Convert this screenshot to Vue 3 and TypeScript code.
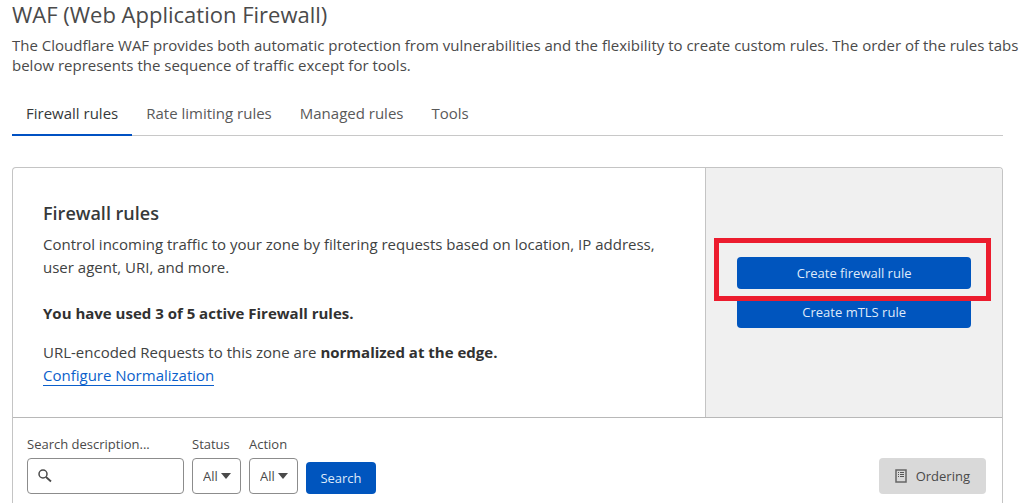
<script setup lang="ts">
import { ref } from 'vue'

const tabs: string[] = ['Firewall rules', 'Rate limiting rules', 'Managed rules', 'Tools']
const activeTab = ref<string>(tabs[0])
const query = ref<string>('')
const filters = ref([
  { id: 'status', label: 'Status', value: 'All', options: ['All', 'Enabled', 'Disabled'] },
  { id: 'action', label: 'Action', value: 'All', options: ['All', 'Block', 'Allow'] },
])
</script>

<template>
  <main class="page">
    <header class="intro">
      <h1>WAF (Web Application Firewall)</h1>
      <p>
        The Cloudflare WAF provides both automatic protection from vulnerabilities and the flexibility to create custom
        rules. The order of the rules tabs below represents the sequence of traffic except for tools.
      </p>
    </header>

    <div class="content">
      <nav class="tabs">
        <a
          v-for="tab in tabs"
          :key="tab"
          href="#"
          class="tab"
          :class="{ active: tab === activeTab }"
          @click.prevent="activeTab = tab"
          >{{ tab }}</a
        >
      </nav>

      <section class="panel">
        <div class="summary">
          <div class="details">
            <h2>Firewall rules</h2>
            <p>
              Control incoming traffic to your zone by filtering requests based on location, IP address, user agent,
              URI, and more.
            </p>
            <p class="usage"><strong>You have used 3 of 5 active Firewall rules.</strong></p>
            <p>URL-encoded Requests to this zone are <strong>normalized at the edge.</strong></p>
            <p><a href="#" class="link">Configure Normalization</a></p>
          </div>
          <div class="actions">
            <div class="highlighted">
              <button type="button" class="primary">Create firewall rule</button>
              <span class="marker"></span>
            </div>
            <button type="button" class="primary">Create mTLS rule</button>
          </div>
        </div>

        <form class="filters" @submit.prevent>
          <div class="field search">
            <label for="search">Search description...</label>
            <div class="box">
              <svg class="magnifier" viewBox="0 0 14 14" width="14" height="14" aria-hidden="true">
                <circle cx="5" cy="5" r="4" fill="none" stroke="#4a4a4a" stroke-width="1.5" />
                <path d="M8 8L13 12.5" stroke="#4a4a4a" stroke-width="1.8" />
              </svg>
              <input id="search" v-model="query" type="text" />
            </div>
          </div>
          <div v-for="filter in filters" :key="filter.id" class="field">
            <label :for="filter.id">{{ filter.label }}</label>
            <div class="box select">
              <select :id="filter.id" v-model="filter.value">
                <option v-for="option in filter.options" :key="option">{{ option }}</option>
              </select>
              <svg class="caret" viewBox="0 0 10 6" width="10" height="6" aria-hidden="true">
                <path d="M0 0H10L5 6Z" fill="#4a4a4a" />
              </svg>
            </div>
          </div>
          <button type="submit" class="primary submit">Search</button>
          <button type="button" class="ordering">
            <svg viewBox="0 0 12 14" width="12" height="14" aria-hidden="true">
              <rect x="1" y="1" width="10" height="12" fill="none" stroke="#666" stroke-width="1.5" />
              <path d="M3 3.5H4M5 3.5H9M3 5.5H4M5 5.5H9M3 7.5H4M5 7.5H9" stroke="#555" />
            </svg>
            <span>Ordering</span>
          </button>
        </form>
      </section>
    </div>
  </main>
</template>

<style>
body {
  margin: 0;
  background: #fff;
}
</style>

<style scoped>
.page {
  font-family: 'Open Sans', 'Noto Sans', sans-serif;
  font-size: 15px;
  color: #4a4a4a;
}
h1,
h2,
p {
  margin: 0;
}
.intro {
  padding: 0 2px 0 12px;
  line-height: 20px;
}
h1 {
  margin-bottom: 7px;
  font-size: 22px;
  line-height: 28px;
  font-weight: 400;
}
.content {
  padding: 0 21px 0 12px;
}
.tabs {
  display: flex;
  margin-top: 18px;
  border-bottom: 1px solid #c8c8c8;
}
.tab {
  padding: 8px 14px 9px;
  line-height: 24px;
  color: #595959;
  text-decoration: none;
  border-bottom: 2px solid transparent;
  margin-bottom: -1px;
}
.tab.active {
  color: #36393a;
  border-bottom-color: #0051c3;
}
.panel {
  margin-top: 31px;
  border: 1px solid #c4c4c4;
  border-bottom: 0;
  border-radius: 4px 4px 0 0;
}
.summary {
  display: grid;
  grid-template-columns: 7fr 3fr;
  border-bottom: 1px solid #b8b8b8;
}
.details {
  padding: 31px 30px 30px;
  line-height: 23px;
  color: #404242;
}
h2 {
  margin-bottom: 6px;
  font-size: 18px;
  line-height: 28px;
  font-weight: 600;
  color: #36393a;
}
strong {
  font-weight: 700;
  color: #313131;
}
.usage {
  margin: 23px 0 16px;
}
.link {
  color: #0b5fcb;
  text-decoration: none;
  border-bottom: 1px solid #0b5fcb;
}
.actions {
  display: flex;
  flex-direction: column;
  justify-content: center;
  gap: 7px;
  padding: 0 31px;
  border-left: 1px solid #c4c4c4;
  border-top-right-radius: 3px;
  background: #f0f0f0;
}
button,
input,
select {
  font: inherit;
}
.primary {
  width: 100%;
  height: 32px;
  padding: 0;
  border: 0;
  border-radius: 4px;
  background: #0055be;
  color: #dfeafa;
  font-size: 13px;
}
.highlighted {
  position: relative;
  z-index: 1;
  display: flex;
}
.marker {
  position: absolute;
  inset: -19px -20px -12px -23px;
  border: 5px solid #ec1c2e;
  pointer-events: none;
}
.filters {
  display: flex;
  align-items: flex-end;
  gap: 8px;
  padding: 16px 16px 10px 14px;
}
.field label {
  display: block;
  margin-bottom: 4px;
  font-size: 13px;
  line-height: 20px;
}
.box {
  display: flex;
  align-items: center;
  box-sizing: border-box;
  height: 36px;
  border: 1px solid #8c8c8c;
  border-radius: 4px;
}
.search {
  width: 157px;
}
.magnifier {
  flex: none;
  margin-left: 10px;
}
.box input {
  flex: 1;
  min-width: 0;
  height: 32px;
  padding: 0 8px;
  border: 0;
  outline: 0;
  background: transparent;
}
.select {
  position: relative;
  width: 49px;
}
.select select {
  width: 100%;
  height: 100%;
  padding: 0 0 0 10px;
  border: 0;
  background: transparent;
  appearance: none;
  color: #4a4a4a;
  font-size: 13px;
}
.caret {
  position: absolute;
  right: 9px;
  top: 14px;
  pointer-events: none;
}
.submit {
  width: 70px;
}
.ordering {
  display: flex;
  align-items: center;
  gap: 9px;
  height: 36px;
  margin-left: auto;
  padding: 0 16px;
  border: 0;
  border-radius: 4px;
  background: #d9d9d9;
  color: #4a4a4a;
  font-size: 13px;
}
</style>
